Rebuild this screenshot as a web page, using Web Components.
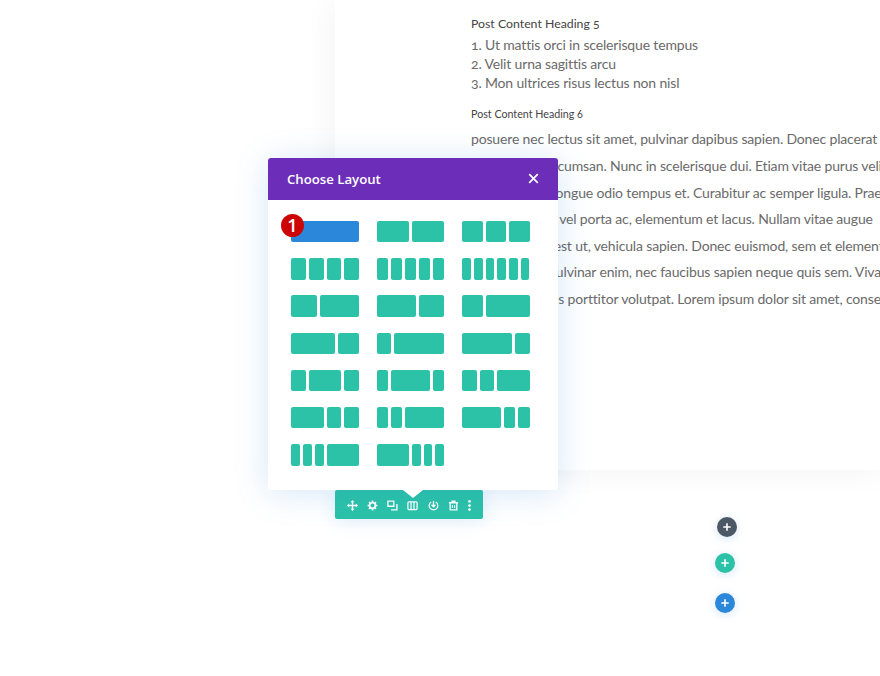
<!DOCTYPE html>
<html>
<head>
<meta charset="utf-8">
<title>Choose Layout</title>
<style>
html, body { margin: 0; height: 100%; background: #fff; overflow: hidden; }
</style>
</head>
<body>
<builder-page></builder-page>
<script>
class PostCard extends HTMLElement {
    constructor() {
        super();
        this.attachShadow({mode: 'open'}).innerHTML = `
        <style>
        :host {
            display: block;
            box-sizing: border-box;
            height: 470px;
            margin-left: 335px;
            padding: 14px 0 0 136px;
            background: #fff;
            box-shadow: 0 0 32px rgba(0,0,0,.055);
            overflow: hidden;
            white-space: nowrap;
            font: 14px/18.8px Lato, "Liberation Sans", sans-serif;
            letter-spacing: -.16px;
            font-feature-settings: "onum";
            color: #6a6a6a;
        }
        h5, h6 { margin: 0; font-weight: 400; color: #444; letter-spacing: 0; }
        h5 { font-size: 12.3px; line-height: 19px; padding-bottom: 3px; }
        h6 { font-size: 10.7px; line-height: 15px; padding: 13.4px 0 5.6px; }
        ol { margin: 0; padding: 0; list-style: none; }
        p { margin: 0; line-height: 26.6px; }
        </style>
        <h5>Post Content Heading 5</h5>
        <ol>
            <li>1. Ut mattis orci in scelerisque tempus</li>
            <li>2. Velit urna sagittis arcu</li>
            <li>3. Mon ultrices risus lectus non nisl</li>
        </ol>
        <h6>Post Content Heading 6</h6>
        <p>posuere nec lectus sit amet, pulvinar dapibus sapien. Donec placerat</p>
        <p>Aenean sed accumsan. Nunc in scelerisque dui. Etiam vitae purus velit</p>
        <p>Proin velit at congue odio tempus et. Curabitur ac semper ligula. Praesent</p>
        <p>Morbi sagittas vel porta ac, elementum et lacus. Nullam vitae augue</p>
        <p>Quisque arcu est ut, vehicula sapien. Donec euismod, sem et elementum</p>
        <p>Etiam quam, pulvinar enim, nec faucibus sapien neque quis sem. Vivamus</p>
        <p>Sed in maximus porttitor volutpat. Lorem ipsum dolor sit amet, consectetur</p>`;
    }
}
customElements.define('post-card', PostCard);

// one preset of the picker, cols="1/4 1/2 1/4"
class LayoutOption extends HTMLElement {
    constructor() {
        super();
        this.attachShadow({mode: 'open'}).innerHTML = `
        <style>
        :host { display: flex; gap: 3px; height: 21.4px; --col: #2bc2a7; }
        :host([active]) { --col: #2b87da; }
        i { display: block; border-radius: 2px; background: var(--col); flex: 0 0 calc((100% + 3px) * var(--f) - 3px); }
        </style>`;
    }
    connectedCallback() {
        this.shadowRoot.append(...this.getAttribute('cols').split(' ').map(c => {
            let [a, b] = c.split('/');
            let col = document.createElement('i');
            col.style.setProperty('--f', a / b);
            return col;
        }));
    }
}
customElements.define('layout-option', LayoutOption);

class LayoutModal extends HTMLElement {
    constructor() {
        super();
        this.attachShadow({mode: 'open'}).innerHTML = `
        <style>
        :host {
            position: absolute; left: 268px; top: 158px;
            width: 290px; height: 332px;
            display: block;
            background: #fff;
            border-radius: 3px;
            box-shadow: 0 3px 34px rgba(43,135,218,.2);
            font-family: "Open Sans", "Liberation Sans", sans-serif;
        }
        header {
            height: 41.5px; box-sizing: border-box;
            display: flex; align-items: center; justify-content: space-between;
            padding: 0 19px;
            background: #6c2eb9; color: #fff;
            border-radius: 3px 3px 0 0;
            font-size: 13.2px; font-weight: 600;
        }
        header svg { display: block; }
        .grid {
            display: grid;
            grid-template-columns: repeat(3, 67.4px);
            column-gap: 18px;
            row-gap: 15.8px;
            padding: 21.5px 0 0 23.4px;
        }
        .badge {
            position: absolute; left: 13px; top: 55.5px;
            width: 23px; height: 23px; border-radius: 50%;
            display: flex; align-items: center; justify-content: center;
            background: #cc0404; color: #fff;
            font-size: 18px; font-weight: 600; line-height: 1;
        }
        .arrow {
            position: absolute; left: 135px; top: 332px;
            width: 0; height: 0;
            border: 10px solid transparent; border-bottom: 0;
            border-top: 8px solid #fff;
        }
        </style>
        <header><span>Choose Layout</span>
            <svg width="11" height="11" viewBox="0 0 11 11"><path d="M1.2 1.2l8.6 8.6M9.8 1.2l-8.6 8.6" stroke="#fff" stroke-width="1.7" fill="none"/></svg>
        </header>
        <div class="grid">
            <layout-option active cols="1/1"></layout-option>
            <layout-option cols="1/2 1/2"></layout-option>
            <layout-option cols="1/3 1/3 1/3"></layout-option>
            <layout-option cols="1/4 1/4 1/4 1/4"></layout-option>
            <layout-option cols="1/5 1/5 1/5 1/5 1/5"></layout-option>
            <layout-option cols="1/6 1/6 1/6 1/6 1/6 1/6"></layout-option>
            <layout-option cols="2/5 3/5"></layout-option>
            <layout-option cols="3/5 2/5"></layout-option>
            <layout-option cols="1/3 2/3"></layout-option>
            <layout-option cols="2/3 1/3"></layout-option>
            <layout-option cols="1/4 3/4"></layout-option>
            <layout-option cols="3/4 1/4"></layout-option>
            <layout-option cols="1/4 1/2 1/4"></layout-option>
            <layout-option cols="1/5 3/5 1/5"></layout-option>
            <layout-option cols="1/4 1/4 1/2"></layout-option>
            <layout-option cols="1/2 1/4 1/4"></layout-option>
            <layout-option cols="1/5 1/5 3/5"></layout-option>
            <layout-option cols="3/5 1/5 1/5"></layout-option>
            <layout-option cols="1/6 1/6 1/6 1/2"></layout-option>
            <layout-option cols="1/2 1/6 1/6 1/6"></layout-option>
        </div>
        <span class="badge">1</span>
        <span class="arrow"></span>`;
    }
}
customElements.define('layout-modal', LayoutModal);

class RowToolbar extends HTMLElement {
    constructor() {
        super();
        this.attachShadow({mode: 'open'}).innerHTML = `
        <style>
        :host {
            display: flex; align-items: center; gap: 9.3px;
            box-sizing: border-box;
            width: 147.5px; height: 29px; margin-top: 20px; padding: 2px 0 0 11.5px;
            background: #2bc2a7; border-radius: 2px;
            box-shadow: 0 2px 18px rgba(43,135,218,.15);
        }
        svg { display: block; flex: none; width: 11px; height: 11px; fill: none; stroke: #fff; stroke-width: 1.4; }
        .f { fill: #fff; stroke: none; }
        </style>
        <svg viewBox="0 0 12 12"><path stroke-width="1.6" d="M6 1v10M1 6h10"/><path class="f" d="M6 0l2.2 2.4H3.8zM6 12l2.2-2.4H3.8zM0 6l2.4-2.2v4.4zM12 6L9.6 3.8v4.4z"/></svg>
        <svg viewBox="0 0 12 12"><circle cx="6" cy="6" r="3.2" stroke-width="2"/><path stroke-width="1.8" d="M6 .6v2M6 9.4v2M.6 6h2M9.4 6h2M2.2 2.2l1.4 1.4M8.4 8.4l1.4 1.4M9.8 2.2L8.4 3.6M3.6 8.4L2.2 9.8"/></svg>
        <svg viewBox="0 0 12 12"><path stroke-width="1.5" d="M1 1.2h6.4v5.6H1z"/><path stroke-width="1.5" d="M10.8 4.4v6.4H4.4"/></svg>
        <svg viewBox="0 0 12 12"><rect x="1" y="2" width="10" height="8.4" rx="1" stroke-width="1.4"/><path stroke-width="1.4" d="M4.4 2v8.4M7.6 2v8.4"/></svg>
        <svg viewBox="0 0 12 12"><path stroke-width="1.4" d="M3.4 2.2a4.7 4.7 0 1 0 5.2 0"/><path stroke-width="1.5" d="M6 1v6"/><path stroke-width="1.4" d="M3.9 5.2L6 7.4l2.1-2.2"/></svg>
        <svg viewBox="0 0 12 12"><path stroke-width="1.5" d="M1 3h10M2.4 3.4v7.4h7.2V3.4M4.4 3V1.4h3.2V3"/><path stroke-width="1.2" d="M4.8 5.6v3M7.2 5.6v3"/></svg>
        <svg viewBox="0 0 12 12" style="margin-left:-4.7px"><circle class="f" cx="6" cy="1.6" r="1.5"/><circle class="f" cx="6" cy="6" r="1.5"/><circle class="f" cx="6" cy="10.4" r="1.5"/></svg>`;
    }
}
customElements.define('row-toolbar', RowToolbar);

class AddButton extends HTMLElement {
    constructor() {
        super();
        this.attachShadow({mode: 'open'}).innerHTML = `
        <style>
        :host {
            display: flex; align-items: center; justify-content: center;
            width: 20px; height: 20px; border-radius: 50%;
            background: var(--bg, #4c5866);
            box-shadow: 0 2px 10px rgba(43,135,218,.2);
        }
        svg { display: block; }
        </style>
        <svg width="8" height="8" viewBox="0 0 8 8"><path d="M4 .3v7.4M.3 4h7.4" stroke="#fff" stroke-width="1.6" fill="none"/></svg>`;
    }
}
customElements.define('add-button', AddButton);

class BuilderPage extends HTMLElement {
    constructor() {
        super();
        this.attachShadow({mode: 'open'}).innerHTML = `
        <style>
        :host { display: block; position: relative; width: 880px; height: 676px; overflow: hidden; }
        .below { display: flex; align-items: flex-start; padding-left: 335px; }
        .adds { display: flex; flex-direction: column; margin: 47px 0 0 232.5px; }
        .adds add-button:nth-child(2) { margin-top: 16.3px; }
        .adds add-button:nth-child(3) { margin-top: 19.4px; }
        </style>
        <post-card></post-card>
        <div class="below">
            <row-toolbar></row-toolbar>
            <div class="adds">
                <add-button style="margin-left:1.5px"></add-button>
                <add-button style="--bg:#2bc2a7"></add-button>
                <add-button style="--bg:#2b87da"></add-button>
            </div>
        </div>
        <layout-modal></layout-modal>`;
    }
}
customElements.define('builder-page', BuilderPage);
</script>
</body>
</html>
